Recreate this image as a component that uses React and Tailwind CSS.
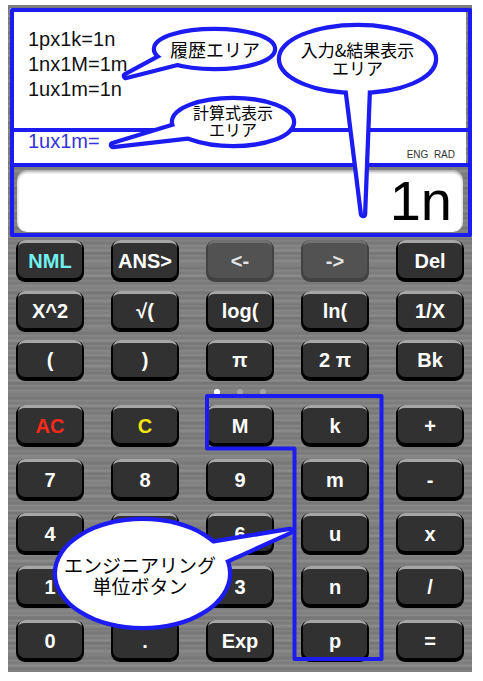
import React from "react";

const B = "#1c1cf2";

const rowsTop = [
  [
    { t: "NML", c: "text-[#72f0f0]" },
    { t: "ANS>" },
    { t: "<-", d: true },
    { t: "->", d: true },
    { t: "Del" },
  ],
  [{ t: "X^2" }, { t: "√(" }, { t: "log(" }, { t: "ln(" }, { t: "1/X" }],
  [{ t: "(" }, { t: ")" }, { t: "π" }, { t: "2 π" }, { t: "Bk" }],
];

const rowsBottom = [
  [
    { t: "AC", c: "text-[#ff2a1a]" },
    { t: "C", c: "text-[#f4e414]" },
    { t: "M" },
    { t: "k" },
    { t: "+" },
  ],
  [{ t: "7" }, { t: "8" }, { t: "9" }, { t: "m" }, { t: "-" }],
  [{ t: "4" }, { t: "5" }, { t: "6" }, { t: "u" }, { t: "x" }],
  [{ t: "1" }, { t: "2" }, { t: "3" }, { t: "n" }, { t: "/" }],
  [{ t: "0" }, { t: "." }, { t: "Exp" }, { t: "p" }, { t: "=" }],
];

const topMargins = ["mt-[8px] h-[42px]", "mt-[9px] h-[41px]", "mt-[8px] h-[41px]"];
const bottomMargins = [
  "mt-[10px] h-[42px]",
  "mt-[12px] h-[42px]",
  "mt-[12px] h-[42px]",
  "mt-[11px] h-[42px]",
  "mt-[12px] h-[42px]",
];

function Key({ t, c, d }) {
  if (d) {
    return (
      <div className="w-[68px] h-full rounded-[9px] bg-[#424242] px-[2px] pb-[4px]">
        <div className="h-full rounded-[7px] bg-[#525252] border-t-[3px] border-t-[#707070] flex items-center justify-center text-[20px] font-bold text-[#e4e4e4]">
          {t}
        </div>
      </div>
    );
  }
  return (
    <div className="w-[68px] h-full rounded-[9px] bg-black px-[2px] pb-[4px]">
      <div
        className={
          "h-full rounded-[7px] bg-[#313131] border-t-[3px] border-t-[#a6a6a6] flex items-center justify-center text-[20px] font-bold " +
          (c ? c : "text-white")
        }
      >
        {t}
      </div>
    </div>
  );
}

function Row({ keys, cls }) {
  return (
    <div className={"flex justify-between px-[8px] " + cls}>
      {keys.map((k, i) => (
        <Key key={i} {...k} />
      ))}
    </div>
  );
}

function Bubble({ cx, cy, rx, ry, tail }) {
  return (
    <g>
      <ellipse cx={cx} cy={cy} rx={rx} ry={ry} fill={B} stroke={B} strokeWidth="8.5" />
      <polygon points={tail} fill={B} stroke={B} strokeWidth="8.5" strokeLinejoin="round" />
      <ellipse cx={cx} cy={cy} rx={rx} ry={ry} fill="white" />
      <polygon points={tail} fill="white" />
    </g>
  );
}

export default function App() {
  return (
    <div
      className="relative w-[483px] h-[681px] bg-white overflow-hidden pt-[5px] pl-[8px]"
      style={{ fontFamily: '"Liberation Sans", Arial, sans-serif' }}
    >
      <div className="w-[464px] h-[667px] flex flex-col bg-[#808080] bg-[image:repeating-linear-gradient(180deg,rgba(255,255,255,0.07)_0px,rgba(255,255,255,0)_2px,rgba(0,0,0,0.06)_3px,rgba(255,255,255,0)_5px),repeating-linear-gradient(180deg,rgba(0,0,0,0.05)_0px,rgba(0,0,0,0)_7px,rgba(255,255,255,0.06)_11px,rgba(0,0,0,0)_13px)]">
        {/* history + expression panel */}
        <div className="ml-[2px] mt-[3px] w-[456px] h-[157px] bg-white flex flex-col">
          <div className="pt-[19px] pl-[18px] text-[20px] leading-[25px] text-[#111]">
            <div>1px1k=1n</div>
            <div>1nx1M=1m</div>
            <div>1ux1m=1n</div>
          </div>
          <div className="mt-auto h-[36px] flex justify-between pl-[18px] pr-[11px]">
            <div className="text-[20px] leading-[25px] text-[#3434dc]">1ux1m=</div>
            <div className="self-end mb-[4px] text-[10px] leading-[12px] text-[#333] whitespace-pre">
              ENG  RAD
            </div>
          </div>
        </div>
        {/* input/result box */}
        <div className="ml-[9px] mt-[5px] w-[446px] h-[62px] rounded-[10px] bg-white shadow-[inset_0_2px_3px_rgba(0,0,0,0.35)] flex items-center justify-end pr-[11px]">
          <div className="text-[56px] leading-none text-black">1n</div>
        </div>
        {rowsTop.map((r, i) => (
          <Row key={i} keys={r} cls={topMargins[i]} />
        ))}
        <div className="mt-[8px] h-[6px] flex justify-center gap-[17px]">
          <div className="w-[6px] h-[6px] rounded-full bg-white" />
          <div className="w-[6px] h-[6px] rounded-full bg-[#a4a4a4]" />
          <div className="w-[6px] h-[6px] rounded-full bg-[#a4a4a4]" />
        </div>
        {rowsBottom.map((r, i) => (
          <Row key={i} keys={r} cls={bottomMargins[i]} />
        ))}
      </div>

      {/* annotation overlay */}
      <svg
        className="absolute left-0 top-0 pointer-events-none"
        width="483"
        height="681"
        viewBox="0 0 483 681"
      >
        <g fill="none" stroke={B} strokeWidth="4" strokeLinejoin="round">
          <rect x="12" y="10" width="458" height="225" />
          <line x1="10" y1="130" x2="472" y2="130" />
          <line x1="10" y1="165" x2="472" y2="165" />
          <polygon points="207,396 381.5,396 381.5,659 294.5,659 294.5,448.5 207,448.5" />
        </g>
        <Bubble cx={214.5} cy={49} rx={58.5} ry={18} tail="126,76 165,55 185,61" />
        <Bubble cx={357.5} cy={59} rx={76.5} ry={32} tail="347,85 363,214 368,85" />
        <Bubble cx={233} cy={122} rx={59} ry={22} tail="113,145 182,124 192,136" />
        <Bubble cx={142.5} cy={573.5} rx={85.5} ry={52.5} tail="205,545 290,531 215,565" />
      </svg>

      <div
        className="absolute inset-0 pointer-events-none text-black"
        style={{ fontFamily: '"Noto Sans CJK JP", sans-serif' }}
      >
        <div className="absolute left-[154px] top-[38px] w-[122px] text-center text-[18px] leading-[22px]">
          履歴エリア
        </div>
        <div className="absolute left-[277px] top-[41px] w-[161px] text-center text-[17px] leading-[18px]">
          <div>入力&結果表示</div>
          <div>エリア</div>
        </div>
        <div className="absolute left-[170px] top-[104px] w-[126px] text-center text-[16px] leading-[17px]">
          <div>計算式表示</div>
          <div>エリア</div>
        </div>
        <div className="absolute left-[50px] top-[554px] w-[180px] text-center text-[19px] leading-[21px]">
          <div>エンジニアリング</div>
          <div>単位ボタン</div>
        </div>
      </div>
    </div>
  );
}
